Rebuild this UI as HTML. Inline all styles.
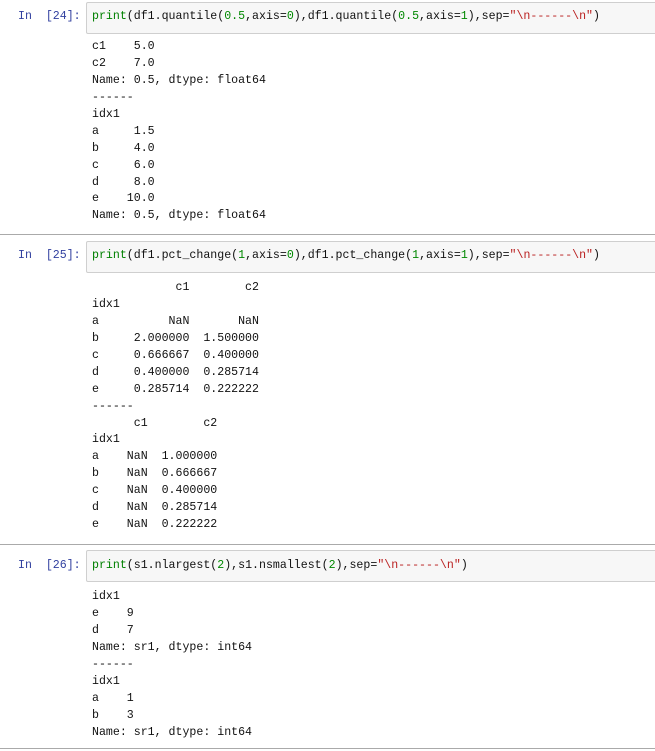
<!DOCTYPE html>
<html><head><meta charset="utf-8"><style>
body{margin:0;width:655px;height:751px;background:#fff;position:relative;overflow:hidden;font-family:"Liberation Mono","Noto Sans CJK SC",monospace;font-size:11.6px;color:#111}
.p{position:absolute;left:18px;color:#303f9f}
.box{position:absolute;left:86px;width:575px;height:30px;background:#f7f7f7;border:1px solid #cfcfcf;border-radius:2px}
.code{position:absolute;left:92px;white-space:pre}
pre{position:absolute;left:92px;margin:0;font:inherit;line-height:16.93px}
.hr{position:absolute;left:0;width:655px;height:1px;background:#aaa}
.g{color:#008000}.n{color:#080}.s{color:#ba2121}
</style></head><body>
<div class="box" style="top:2px"></div>
<div class="p" style="top:10px">In&nbsp;&nbsp;[24]:</div>
<div class="code" style="top:10px"><span class="g">print</span>(df1.quantile(<span class="n">0.5</span>,axis=<span class="n">0</span>),df1.quantile(<span class="n">0.5</span>,axis=<span class="n">1</span>),sep=<span class="s">"\n------\n"</span>)</div>
<pre style="top:39px">c1    5.0
c2    7.0
Name: 0.5, dtype: float64
------
idx1
a     1.5
b     4.0
c     6.0
d     8.0
e    10.0
Name: 0.5, dtype: float64</pre>
<div class="hr" style="top:234px"></div>
<div class="box" style="top:241px"></div>
<div class="p" style="top:249px">In&nbsp;&nbsp;[25]:</div>
<div class="code" style="top:249px"><span class="g">print</span>(df1.pct_change(<span class="n">1</span>,axis=<span class="n">0</span>),df1.pct_change(<span class="n">1</span>,axis=<span class="n">1</span>),sep=<span class="s">"\n------\n"</span>)</div>
<pre style="top:280px">            c1        c2
idx1
a          NaN       NaN
b     2.000000  1.500000
c     0.666667  0.400000
d     0.400000  0.285714
e     0.285714  0.222222
------
      c1        c2
idx1
a    NaN  1.000000
b    NaN  0.666667
c    NaN  0.400000
d    NaN  0.285714
e    NaN  0.222222</pre>
<div class="hr" style="top:544px"></div>
<div class="box" style="top:550px"></div>
<div class="p" style="top:559px">In&nbsp;&nbsp;[26]:</div>
<div class="code" style="top:559px"><span class="g">print</span>(s1.nlargest(<span class="n">2</span>),s1.nsmallest(<span class="n">2</span>),sep=<span class="s">"\n------\n"</span>)</div>
<pre style="top:589px">idx1
e    9
d    7
Name: sr1, dtype: int64
------
idx1
a    1
b    3
Name: sr1, dtype: int64</pre>
<div class="hr" style="top:748px"></div>
</body></html>
